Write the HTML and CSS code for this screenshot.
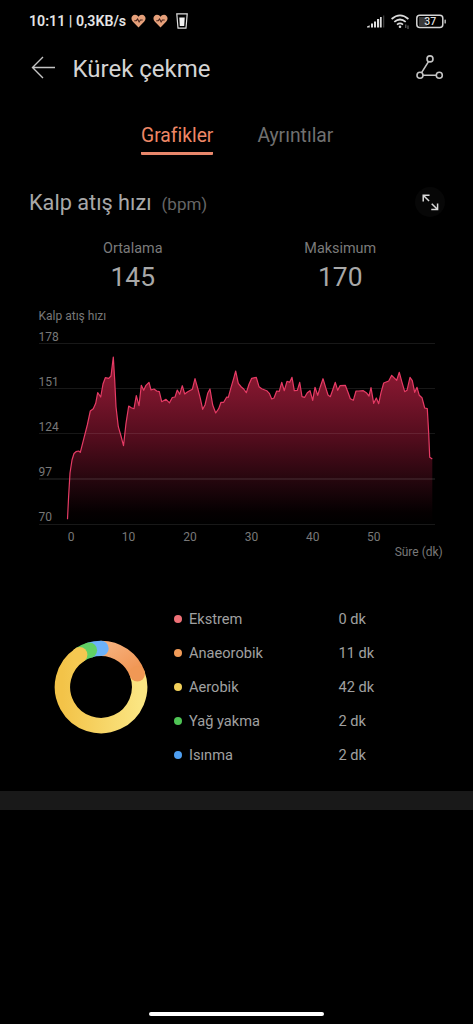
FILE: index.html
```html
<!DOCTYPE html>
<html lang="tr">
<head>
<meta charset="utf-8">
<title>Kürek çekme</title>
<link rel="stylesheet" href="styles.css">
</head>
<body>
<div class="statusbar">
  <span class="clock">10:11 | 0,3KB/s</span>
  <svg class="heart" width="15" height="14" viewBox="0 0 15 14"><path d="M7.5 13.4 1.7 7.6C-.9 4.7.9.7 4 .7c1.500 0 2.800.8 3.500 2C8.200 1.500 9.500.7 11 .7c3.100 0 4.900 4 2.300 6.900z" fill="#e6a07a"/><path d="M3.300 6.700h2l1.300-1.700 1.500 3 1.300-2h2.300" fill="none" stroke="#4b251c" stroke-width="1.100"/></svg>
  <svg class="heart" width="15" height="14" viewBox="0 0 15 14"><path d="M7.500 13.400 1.700 7.600C-.9 4.700.9.700 4 .7c1.500 0 2.800.8 3.500 2C8.200 1.500 9.500.7 11 .7c3.100 0 4.900 4 2.300 6.900z" fill="#e6a07a"/><path d="M3.300 6.700h2l1.300-1.700 1.500 3 1.300-2h2.300" fill="none" stroke="#4b251c" stroke-width="1.100"/></svg>
  <svg class="cup" width="12" height="16" viewBox="0 0 12 16"><path d="M.8.8h10.400L10 15.200H2z" fill="none" stroke="#e0e0e0" stroke-width="1.200"/><path d="M3.300 4.500h5.400l-.5 8.500H3.800z" fill="#f0f0f0"/></svg>
  <span class="grow"></span>
  <svg class="signal" width="18" height="13" viewBox="0 0 18 13"><g fill="#dcdcdc"><path d="M0 12.500v-1l2.700-1.300v2.300zM4 8.500h2v4H4zM7 6.500h2v6H7zM10 4h2.200v8.500H10zM13 2h1.700v10.500H13z"/><path d="M16 .5h1.300v12H16z" fill="#3c3c3c"/></g></svg>
  <svg class="wifi" width="19" height="15" viewBox="0 0 19 15"><g fill="none" stroke="#dcdcdc" stroke-width="1.700"><path d="M.6 5Q9 -2.300 17.400 5M3.300 7.900q5.700-4.800 11.400 0M6 10.600q3-2.400 6 0"/></g><circle cx="9" cy="12.700" r="1.300" fill="#dcdcdc"/><path d="M14.800 10.500v3.500M17 11.500v3.500" stroke="#777" stroke-width="1"/></svg>
  <svg class="battery" width="31" height="15" viewBox="0 0 31 15"><rect x="3" y="3" width="8" height="9" fill="#393939"/><rect x=".8" y="1.200" width="26" height="12.400" rx="3" fill="none" stroke="#d5d5d5" stroke-width="1.500"/><rect x="28.500" y="5.500" width="1.300" height="4" rx=".6" fill="#d5d5d5"/><text x="14.200" y="11.200" class="battery-level">37</text></svg>
</div>

<header class="titlebar">
  <svg class="back" width="26" height="24" viewBox="0 0 26 24"><path d="M24 11.500H1.500M12 1 1.500 11.500 12 22" fill="none" stroke="#c4c4c4" stroke-width="1.400"/></svg>
  <h1>Kürek çekme</h1>
  <svg class="track" width="28" height="26" viewBox="0 0 28 26"><g fill="none" stroke="#c4c4c4" stroke-width="1.600"><circle cx="14" cy="3.900" r="3"/><circle cx="4" cy="20.200" r="3"/><circle cx="23.300" cy="20.200" r="3"/><path d="M12.500 6.600 5.600 17.600M7 20.200h13.300"/></g></svg>
</header>

<nav class="tabs">
  <a class="tab active">Grafikler</a>
  <a class="tab">Ayrıntılar</a>
</nav>

<section class="heading">
  <h2>Kalp atış hızı</h2><span class="unit">(bpm)</span>
  <span class="expand"><svg width="17" height="17" viewBox="0 0 18 18"><path d="M1.300 8V1.300H8M1.300 1.300l6.200 6.200M16.500 10v6.500H9.800M16.500 16.500l-6.200-6.200" fill="none" stroke="#d8d8d8" stroke-width="1.600"/></svg></span>
</section>

<section class="stats">
  <div class="stat"><span class="stat-label">Ortalama</span><span class="stat-value">145</span></div>
  <div class="stat"><span class="stat-label">Maksimum</span><span class="stat-value">170</span></div>
</section>

<svg class="chart" width="473" height="260" viewBox="0 304 473 260">
  <defs>
    <linearGradient id="area" gradientUnits="userSpaceOnUse" x1="0" y1="357" x2="0" y2="524">
      <stop offset="0" stop-color="#971a35"/><stop offset=".25" stop-color="#75142a"/><stop offset=".5" stop-color="#500c1c"/><stop offset=".75" stop-color="#23060d"/><stop offset=".93" stop-color="#050001"/><stop offset="1" stop-color="#000"/>
    </linearGradient>
  </defs>
  <path class="grid" d="M39 343.500H435M39 388.500H435M39 524.500H435"/>
  <path id="fill" fill="url(#area)"/>
  <g class="grid"><path class="over" d="M39 433.500H435"/><path class="strong" d="M39 479H435"/></g>
  <path id="line" class="line"/>
  <g class="labels">
    <text x="38.500" y="320.300" class="axis-title">Kalp atış hızı</text>
    <text x="38.500" y="340.500">178</text><text x="38.500" y="385.500">151</text><text x="38.500" y="430.500">124</text><text x="38.500" y="475.500">97</text><text x="38.500" y="521">70</text>
    <g text-anchor="middle"><text x="71" y="540.500">0</text><text x="128.500" y="540.500">10</text><text x="190" y="540.500">20</text><text x="251.500" y="540.500">30</text><text x="312.700" y="540.500">40</text><text x="373.700" y="540.500">50</text></g>
    <text x="442.800" y="556.300" text-anchor="end">Süre (dk)</text>
  </g>
</svg>

<section class="zones">
  <svg class="donut" width="96" height="96" viewBox="0 0 96 96">
    <defs>
      <linearGradient id="yellow" x1="0" y1="0" x2="1" y2="0"><stop offset="0" stop-color="#f3c348"/><stop offset="1" stop-color="#fae582"/></linearGradient>
      <linearGradient id="orange" x1="0" y1="0" x2="1" y2="1"><stop offset="0" stop-color="#f6b17d"/><stop offset="1" stop-color="#f09350"/></linearGradient>
    </defs>
    <g fill="none" stroke-width="15.400">
      <path d="M84.300 34.800A38.600 38.600 0 1 1 26.700 15.800" stroke="url(#yellow)"/>
      <path d="M48 9.400A38.600 38.600 0 0 1 84.300 34.800" stroke="url(#orange)"/>
      <circle cx="84.300" cy="34.800" r="7.700" fill="#f09855" stroke="none"/>
      <path d="M36.400 11.200A38.600 38.600 0 0 1 48 9.400" stroke="#6cb2fa"/>
      <circle cx="48" cy="9.400" r="7.700" fill="#6cb2fa" stroke="none"/>
      <path d="M26.700 15.800A38.600 38.600 0 0 1 36.400 11.200" stroke="#61d165"/>
      <circle cx="36.400" cy="11.200" r="7.700" fill="#61d165" stroke="none"/>
      <circle cx="26.700" cy="15.800" r="7.700" fill="#f4c851" stroke="none"/>
    </g>
  </svg>
  <ul class="legend">
    <li><i class="dot extreme"></i><span class="name">Ekstrem</span><span>0 dk</span></li>
    <li><i class="dot anaerobic"></i><span class="name">Anaeorobik</span><span>11 dk</span></li>
    <li><i class="dot aerobic"></i><span class="name">Aerobik</span><span>42 dk</span></li>
    <li><i class="dot fat"></i><span class="name">Yağ yakma</span><span>2 dk</span></li>
    <li><i class="dot warmup"></i><span class="name">Isınma</span><span>2 dk</span></li>
  </ul>
</section>

<div class="divider"></div>
<div class="home"></div>
<script src="chart.js"></script>
</body>
</html>
```

FILE: styles.css
```css
* { box-sizing: border-box; margin: 0; padding: 0; }
body {
  width: 473px; height: 1024px; overflow: hidden;
  display: flex; flex-direction: column;
  background: #000; color: #a6a6a6;
  font-family: Roboto, sans-serif;
}
svg { display: block; flex: none; }
h1, h2 { font-weight: 400; }

.statusbar { height: 42px; padding: 0 26px 0 29px; display: flex; align-items: center; }
.clock { color: #e4e4e4; font-size: 14.2px; font-weight: 600; line-height: 42px; width: 102px; white-space: nowrap; }
.heart { margin-right: 7px; }
.cup { margin-left: 1px; }
.grow { flex: 1; }
.signal { margin-right: 6px; }
.wifi { margin-right: 6px; }
.battery-level { font-size: 10.5px; font-weight: 500; text-anchor: middle; fill: #ddd; }

.titlebar { height: 52px; padding: 0 29px 0 31px; display: flex; align-items: center; }
.titlebar h1 { flex: 1; margin-left: 15.5px; padding-top: 2px; color: #d4d4d4; font-size: 24px; line-height: 50px; white-space: nowrap; }

.tabs { height: 86px; padding: 26px 0 0 141px; display: flex; gap: 44px; align-items: flex-start; }
.tab { height: 35px; font-size: 19.3px; line-height: 32px; color: #707070; white-space: nowrap; }
.tab.active { color: #ee8766; border-bottom: 3px solid #e8876b; border-radius: 1px; }

.heading { height: 44px; padding: 0 28px 0 29px; display: flex; align-items: center; }
.heading h2 { font-size: 21.7px; color: #a8a8a8; white-space: nowrap; }
.unit { flex: 1; margin-left: 10px; padding-top: 3px; font-size: 17px; color: #666; }
.expand { width: 30px; height: 30px; display: grid; place-items: center; border-radius: 50%; background: #070707; }

.stats { height: 80px; padding: 14px 29px 0 29px; display: grid; grid-template-columns: 1fr 1fr; }
.stat { display: flex; flex-direction: column; align-items: center; }
.stat-label { font-size: 14.4px; line-height: 21px; color: #7b7b7b; }
.stat-value { font-size: 26.4px; line-height: 36px; color: #a8a8a8; }

.grid { fill: none; stroke: #181818; stroke-width: 1; }
.grid .over { stroke: rgba(255, 255, 255, .09); }
.grid .strong { stroke: rgba(255, 255, 255, .17); }
.line { fill: none; stroke: #e63b65; stroke-width: 1.2; stroke-linejoin: round; }
.labels text { font-size: 12px; fill: #787878; }

.zones { height: 227px; padding: 38px 0 0 53px; display: flex; align-items: flex-start; }
.donut { margin-top: 36.5px; }
.legend { list-style: none; margin-left: 25px; }
.legend li { height: 34.1px; display: flex; align-items: center; font-size: 14.6px; color: #a0a0a0; }
.dot { width: 8px; height: 8px; margin-right: 7px; border-radius: 50%; }
.name { width: 149.5px; }
.extreme { background: #ef7177; }
.anaerobic { background: #f19b58; }
.aerobic { background: #f2d05a; }
.fat { background: #4fc455; }
.warmup { background: #4e9ff2; }

.divider { height: 19px; background: #191919; }
.home { width: 175px; height: 4px; margin: auto auto 8px 149px; border-radius: 2px; background: #fff; }
```

FILE: chart.js
```js
// Heart rate samples as x,y pairs in the chart's own coordinates.
const samples = `67.5,519.3 68.6,496.7 70,473 72,460 74,453.5 76,451.7 78.6,451 80.3,452.3 83.3,440.7 87.3,425
90.3,411 93.3,408.7 95.7,403.3 97.7,392.7 100.7,397 103,384 105.3,377.7 108.7,378.3 111,376 113.3,357
114.7,380 116,406.7 118.3,426.7 121,436 123.5,445.7 126,423.3 128.7,406 131.3,407.7 134,408.7 136.3,395.7
139,405.7 141.3,385.3 143.7,390.3 146,385.3 149,382.3 151,390 154,389 156.7,391 159.3,391.7 161.7,401.7
166,399.3 169.5,402.8 172.3,397.5 175,397 177.3,390 179.7,394.3 182.3,385.7 184.7,394 187.3,392 192.3,389.3
195,378.7 198,389.3 200.3,398.3 202.7,409.3 205,405 207.7,393.3 210,389 212.7,405 215.7,413 218.7,408.7
221,402.3 223.7,402.3 226.7,397 228.3,397.3 231,387.7 233.7,378.3 235.7,371 238.3,383.3 241.3,387 243.7,389
246.3,392.7 249,384.3 251.7,378.3 256.3,377.3 259,386.7 261.7,388.7 266.7,390.7 269.3,393.3 271.7,399 274,398
276.7,391 279.3,391.3 281.7,382.3 284.3,390.7 287,381.3 289.7,382.3 292,377.3 294.3,390.7 297.3,390.3 299.7,382.3
302,396.7 304.7,397.3 307.3,392.7 310,390.7 312.7,400.3 315,387.3 317.7,395.3 320.3,386.7 323,378.7 325.7,387.7
328,395 330.3,396.7 332.7,390 335.3,382.3 337.7,390.3 340,385.7 345.3,385.3 348,392.3 350.3,398.7 353.3,400.3
356,391 358.7,391 363.3,390.7 366.3,392.7 369,396 371,387.7 373.7,403.3 376.3,398 378.7,403.7 381,392.7
383.7,383 388.7,381 391.7,375.3 396.7,380.3 399.3,372.3 402,382.3 404.7,391.7 407,390.3 410,377.3 412.3,380.7
414.7,392.3 417,387.3 419.3,395.3 422,397.7 424.7,408 427.3,408.7 428.7,433.3 429.7,457.3 432.3,459`;
const path = 'M' + samples.trim().split(/\s+/).join('L');
document.getElementById('line').setAttribute('d', path);
document.getElementById('fill').setAttribute('d', path + 'V524H67.5Z');
```
